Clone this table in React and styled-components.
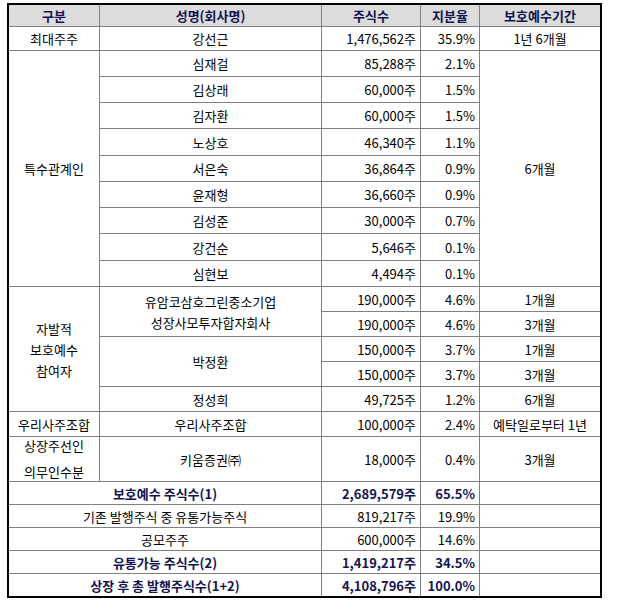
import React from 'react';
import styled, { createGlobalStyle } from 'styled-components';

const GlobalStyle = createGlobalStyle`
  body {
    margin: 0;
    background: #fff;
    font-family: "Noto Sans CJK KR", "Noto Sans", sans-serif;
  }
`;

const Page = styled.div`
  padding: 3px 0 0 7px;
`;

const Grid = styled.div`
  display: grid;
  width: 591px;
  grid-template-columns: 90px 221px 98px 58px 120px;
  grid-template-rows: ${({ $rows }) => $rows};
  gap: 1px;
  background: #808080;
  border: 2px solid #000;
`;

const Cell = styled.div`
  grid-column: ${({ $col }) => $col} / span ${({ $cs }) => $cs || 1};
  grid-row: ${({ $row }) => $row} / span ${({ $rs }) => $rs || 1};
  display: flex;
  flex-direction: column;
  align-items: ${({ $align }) =>
    $align === 'right' ? 'flex-end' : 'center'};
  justify-content: center;
  padding: 0 ${({ $align }) => ($align === 'right' ? '4px' : '0')} 0 0;
  background: ${({ $head }) => ($head ? '#dcdcdc' : '#fff')};
  color: ${({ $bold }) => ($bold ? '#141450' : '#000')};
  font-size: 13px;
  font-weight: ${({ $bold }) => ($bold ? 700 : 400)};
  line-height: ${({ $lh }) => $lh || 21}px;
  white-space: nowrap;
  text-align: center;
`;

// 행 높이 (구분선 1px 제외)
const rowHeights = [
  21, 23,
  25, 25, 25, 26, 25, 25, 25, 26, 25,
  24, 24, 24, 24, 24, 24,
  44,
  22, 22, 22, 22, 22,
];

const special = [
  ['심재걸', '85,288주', '2.1%'],
  ['김상래', '60,000주', '1.5%'],
  ['김자환', '60,000주', '1.5%'],
  ['노상호', '46,340주', '1.1%'],
  ['서은숙', '36,864주', '0.9%'],
  ['윤재형', '36,660주', '0.9%'],
  ['김성준', '30,000주', '0.7%'],
  ['강건순', '5,646주', '0.1%'],
  ['심현보', '4,494주', '0.1%'],
];

const voluntary = [
  ['190,000주', '4.6%', '1개월'],
  ['190,000주', '4.6%', '3개월'],
  ['150,000주', '3.7%', '1개월'],
  ['150,000주', '3.7%', '3개월'],
  ['49,725주', '1.2%', '6개월'],
];

const totals = [
  ['보호예수 주식수(1)', '2,689,579주', '65.5%', true],
  ['기존 발행주식 중 유통가능주식', '819,217주', '19.9%', false],
  ['공모주주', '600,000주', '14.6%', false],
  ['유통가능 주식수(2)', '1,419,217주', '34.5%', true],
  ['상장 후 총 발행주식수(1+2)', '4,108,796주', '100.0%', true],
];

const headers = ['구분', '성명(회사명)', '주식수', '지분율', '보호예수기간'];

export default function App() {
  return (
    <>
      <GlobalStyle />
      <Page>
        <Grid $rows={rowHeights.map((h) => `${h}px`).join(' ')}>
          {headers.map((h, i) => (
            <Cell key={h} $col={i + 1} $row={1} $head $bold>
              {h}
            </Cell>
          ))}

          <Cell $col={1} $row={2}>최대주주</Cell>
          <Cell $col={2} $row={2}>강선근</Cell>
          <Cell $col={3} $row={2} $align="right">1,476,562주</Cell>
          <Cell $col={4} $row={2} $align="right">35.9%</Cell>
          <Cell $col={5} $row={2}>1년 6개월</Cell>

          <Cell $col={1} $row={3} $rs={9}>특수관계인</Cell>
          <Cell $col={5} $row={3} $rs={9}>6개월</Cell>
          {special.map(([name, shares, pct], i) => (
            <React.Fragment key={name}>
              <Cell $col={2} $row={3 + i}>{name}</Cell>
              <Cell $col={3} $row={3 + i} $align="right">{shares}</Cell>
              <Cell $col={4} $row={3 + i} $align="right">{pct}</Cell>
            </React.Fragment>
          ))}

          <Cell $col={1} $row={12} $rs={5}>
            <span>자발적</span>
            <span>보호예수</span>
            <span>참여자</span>
          </Cell>
          <Cell $col={2} $row={12} $rs={2}>
            <span>유암코삼호그린중소기업</span>
            <span>성장사모투자합자회사</span>
          </Cell>
          <Cell $col={2} $row={14} $rs={2}>박정환</Cell>
          <Cell $col={2} $row={16}>정성희</Cell>
          {voluntary.map(([shares, pct, period], i) => (
            <React.Fragment key={i}>
              <Cell $col={3} $row={12 + i} $align="right">{shares}</Cell>
              <Cell $col={4} $row={12 + i} $align="right">{pct}</Cell>
              <Cell $col={5} $row={12 + i}>{period}</Cell>
            </React.Fragment>
          ))}

          <Cell $col={1} $row={17}>우리사주조합</Cell>
          <Cell $col={2} $row={17}>우리사주조합</Cell>
          <Cell $col={3} $row={17} $align="right">100,000주</Cell>
          <Cell $col={4} $row={17} $align="right">2.4%</Cell>
          <Cell $col={5} $row={17}>예탁일로부터 1년</Cell>

          <Cell $col={1} $row={18} $lh={26}>
            <span>상장주선인</span>
            <span>의무인수분</span>
          </Cell>
          <Cell $col={2} $row={18}>키움증권㈜</Cell>
          <Cell $col={3} $row={18} $align="right">18,000주</Cell>
          <Cell $col={4} $row={18} $align="right">0.4%</Cell>
          <Cell $col={5} $row={18}>3개월</Cell>

          {totals.map(([label, shares, pct, bold], i) => (
            <React.Fragment key={label}>
              <Cell $col={1} $cs={2} $row={19 + i} $bold={bold}>{label}</Cell>
              <Cell $col={3} $row={19 + i} $align="right" $bold={bold}>{shares}</Cell>
              <Cell $col={4} $row={19 + i} $align="right" $bold={bold}>{pct}</Cell>
              <Cell $col={5} $row={19 + i} />
            </React.Fragment>
          ))}
        </Grid>
      </Page>
    </>
  );
}
